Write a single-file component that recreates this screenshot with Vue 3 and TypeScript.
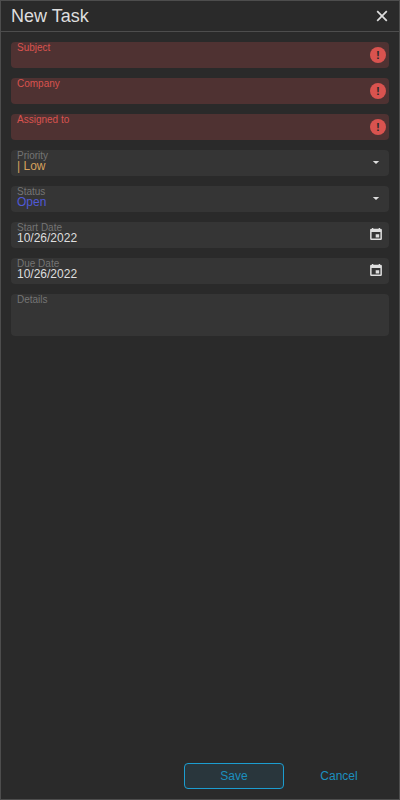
<script setup lang="ts">
import { ref } from 'vue'

type Kind = 'required' | 'select' | 'date' | 'area'

interface Field {
  label: string
  kind: Kind
  value: string
  tone?: 'low' | 'open'
}

const fields = ref<Field[]>([
  { label: 'Subject', kind: 'required', value: '' },
  { label: 'Company', kind: 'required', value: '' },
  { label: 'Assigned to', kind: 'required', value: '' },
  { label: 'Priority', kind: 'select', value: '| Low', tone: 'low' },
  { label: 'Status', kind: 'select', value: 'Open', tone: 'open' },
  { label: 'Start Date', kind: 'date', value: '10/26/2022' },
  { label: 'Due Date', kind: 'date', value: '10/26/2022' },
  { label: 'Details', kind: 'area', value: '' },
])
</script>

<template>
  <section class="popup">
    <header class="header">
      <h1 class="title">New Task</h1>
      <button class="close" type="button" aria-label="Close">
        <svg width="12" height="12" viewBox="0 0 12 12">
          <path d="M1.2 1.2 10.8 10.8M10.8 1.2 1.2 10.8" fill="none" stroke="#dedede" stroke-width="1.7" />
        </svg>
      </button>
    </header>

    <form class="form" @submit.prevent>
      <div v-for="field in fields" :key="field.label" class="field" :class="field.kind">
        <div class="content">
          <span class="label">{{ field.label }}</span>
          <span v-if="field.value" class="value" :class="field.tone">{{ field.value }}</span>
        </div>
        <span v-if="field.kind === 'required'" class="badge">!</span>
        <svg v-else-if="field.kind === 'select'" class="icon" width="12" height="12" viewBox="0 0 12 12">
          <path d="M2.8 4.9h6.4L6 8.100z" fill="#dedede" />
        </svg>
        <svg v-else-if="field.kind === 'date'" class="icon" width="12" height="12" viewBox="0 0 12 12">
          <path
            fill="#dedede"
            fill-rule="evenodd"
            d="M2 0h1.3v.8h5.4V0H10v.8h.7q1.200 0 1.200 1.200v8.800q0 1.200-1.200 1.200H1.300Q.1 12 .1 10.800V2Q.1.800 1.300.800H2zM1.600 4v6.600h8.800V4zM5.700 6.200h3.500v3.200H5.700z"
          />
        </svg>
      </div>
    </form>

    <footer class="footer">
      <button class="button save" type="button">Save</button>
      <button class="button" type="button">Cancel</button>
    </footer>
  </section>
</template>

<style>
body {
  margin: 0;
  background: #2a2a2a;
}
</style>

<style scoped>
.popup {
  display: flex;
  flex-direction: column;
  box-sizing: border-box;
  height: 100vh;
  border: 1px solid #4d4d4d;
  background: #2a2a2a;
  color: #dedede;
  font-family: "Liberation Sans", Arial, sans-serif;
  font-size: 12px;
}

.header {
  display: flex;
  align-items: center;
  justify-content: space-between;
  box-sizing: border-box;
  height: 31px;
  padding: 0 11px 0 10px;
  border-bottom: 1px solid #4d4d4d;
}

.title {
  margin: 0;
  font-size: 18px;
  font-weight: 400;
  line-height: 30px;
}

.close {
  display: flex;
  padding: 0;
  border: 0;
  background: none;
}

.form {
  display: flex;
  flex: 1;
  flex-direction: column;
  gap: 10px;
  padding: 10px;
}

.field {
  display: flex;
  justify-content: space-between;
  box-sizing: border-box;
  height: 26px;
  padding: 0 7px 0 6px;
  border-radius: 4px;
  background: #353535;
}

.field.required {
  padding-right: 3px;
  background: #4f3232;
}

.field.area {
  height: 42px;
}

.content {
  display: flex;
  flex-direction: column;
}

.label {
  height: 10px;
  color: #747474;
  font-size: 10px;
  line-height: 12px;
}

.required .label {
  color: #d9534f;
}

.value {
  line-height: 13px;
}

.low {
  color: #d6a15c;
}

.open {
  color: #5059d6;
}

.badge {
  align-self: center;
  width: 16px;
  height: 16px;
  border-radius: 50%;
  background: #d9534f;
  color: #2a2a2a;
  font-size: 11.500px;
  font-weight: 700;
  line-height: 16px;
  text-align: center;
}

.icon {
  margin-top: 6px;
}

.footer {
  display: flex;
  justify-content: flex-end;
  gap: 5px;
  padding: 10px;
}

.button {
  box-sizing: border-box;
  width: 100px;
  height: 26px;
  padding: 0;
  border: 1px solid transparent;
  border-radius: 4px;
  background: none;
  color: #1c8fbf;
  font: inherit;
}

.save {
  border-color: #1c9dd0;
  background: #29363c;
}
</style>
